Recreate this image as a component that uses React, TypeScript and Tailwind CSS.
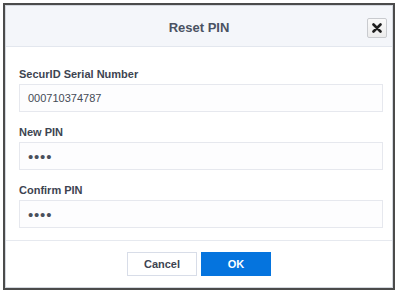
import React from "react";

const fields = [
  { label: "SecurID Serial Number", value: "000710374787", secret: false },
  { label: "New PIN", value: "••••", secret: true },
  { label: "Confirm PIN", value: "••••", secret: true },
];

const App = () => {
  return (
    <div
      className="w-[399px] h-[292px] bg-white pt-[3px] pl-[3px]"
      style={{ fontFamily: '"Liberation Sans", Arial, sans-serif' }}
    >
      <div className="w-[392px] h-[287px] border-2 border-[#4b4b4b] flex flex-col">
        <div className="flex-1 flex flex-col border border-[#d3d7de] bg-white">
          <div className="relative h-[41px] bg-[#f4f6fa] border-b border-[#e3e7ee] flex items-center justify-center">
            <h2 className="text-[13px] font-bold text-[#4a5262] mt-[3px]">Reset PIN</h2>
            <button className="absolute right-[5px] top-[12px] w-[20px] h-[20px] rounded-[2px] border border-[#c9cbcf] bg-gradient-to-b from-[#fafafa] to-[#ececec] flex items-center justify-center">
              <svg width="10" height="10" viewBox="0 0 10 10">
                <path d="M1.5 1.5 L8.5 8.5 M8.5 1.5 L1.5 8.5" stroke="#1f1f1f" strokeWidth="2.6" strokeLinecap="round" />
              </svg>
            </button>
          </div>

          <div className="pl-[13px] pr-[9px] pt-[19px] pb-[12px] flex flex-col gap-[12px]">
            {fields.map((f) => (
              <div key={f.label} className="flex flex-col gap-[2px]">
                <label className="h-[16px] leading-[16px] text-[11px] font-bold text-[#3d4451]">
                  {f.label}
                </label>
                <div className="h-[28px] border border-[#e6e8ee] bg-[#fdfdfe] flex items-center pl-[8px]">
                  {f.secret ? (
                    <span className="text-[15px] tracking-[0.8px] text-[#4a505c] leading-none">{f.value}</span>
                  ) : (
                    <span className="text-[11px] text-[#454b56]">{f.value}</span>
                  )}
                </div>
              </div>
            ))}
          </div>

          <div className="flex-1 border-t border-[#e6e9ef] flex items-center justify-center gap-[4px]">
            <button className="w-[70px] h-[24px] border border-[#d8dde8] bg-white text-[11px] font-bold text-[#3d4451]">
              Cancel
            </button>
            <button className="w-[70px] h-[24px] bg-[#0574de] text-[11px] font-bold text-white">
              OK
            </button>
          </div>
        </div>
      </div>
    </div>
  );
};

export default App;
